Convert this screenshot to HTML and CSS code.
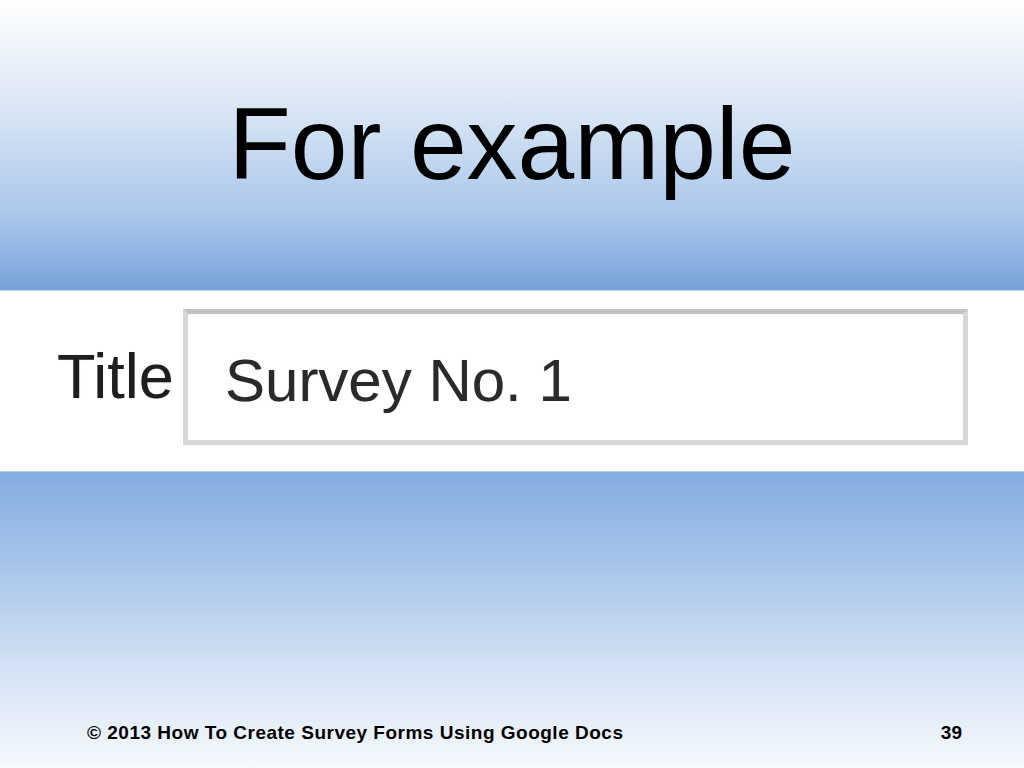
FILE: index.html
```html
<!DOCTYPE html>
<html>
<head>
<meta charset="utf-8">
<link rel="stylesheet" href="styles.css">
</head>
<body>
<div class="slide">
  <header class="top">
    <h1 class="heading">For example</h1>
  </header>
  <section class="band">
    <span class="label">Title</span>
    <div class="field"><span class="field-text">Survey No. 1</span></div>
  </section>
  <section class="bottom">
    <footer class="footer">
      <span class="footer-left">© 2013 How To Create Survey Forms Using Google Docs</span>
      <span class="footer-right">39</span>
    </footer>
  </section>
</div>
</body>
</html>
```
FILE: styles.css
```css
html, body {
  margin: 0;
  padding: 0;
  background: #ffffff;
}
.slide {
  width: 1024px;
  height: 768px;
  display: flex;
  flex-direction: column;
  font-family: "Liberation Sans", Arial, sans-serif;
  overflow: hidden;
}
.top {
  height: 290px;
  box-sizing: border-box;
  padding-top: 93px;
  background: linear-gradient(to bottom, #ffffff 0%, #dde8f6 35%, #a9c6ea 75%, #76a3da 100%);
  display: flex;
  justify-content: center;
}
.heading {
  margin: 0;
  font-weight: normal;
  font-size: 102px;
  line-height: 1;
  color: #000000;
  height: 102px;
}
.band {
  height: 182px;
  box-sizing: border-box;
  background: #ffffff;
  border-top: 1px solid #c6daf0;
  border-bottom: 1px solid #b9d1ee;
  display: flex;
  align-items: flex-start;
  padding: 18px 56px 0 57px;
}
.label {
  margin-top: 36px;
  font-size: 63px;
  line-height: 1;
  color: #1e1e1e;
  text-shadow: 0 0 1px rgba(0, 0, 0, 0.25);
}
.field {
  flex: 0 0 785px;
  height: 136px;
  box-sizing: border-box;
  margin-left: auto;
  border: 5px solid #d6d6d6;
  border-top-color: #c2c2c2;
  background: #ffffff;
  padding: 37px 0 0 37px;
}
.field-text {
  display: block;
  font-size: 60px;
  line-height: 1;
  color: #2a2a2a;
  text-shadow: 0 0 1px rgba(0, 0, 0, 0.25);
}
.bottom {
  flex: 1;
  background: linear-gradient(to bottom, #84aee0 0%, #a6c4ea 30%, #d2e1f4 65%, #f6f9fd 100%);
  display: flex;
  flex-direction: column;
  justify-content: flex-end;
  padding: 0 62px 26px 87px;
}
.footer {
  display: flex;
  justify-content: space-between;
  font-size: 19px;
  font-weight: bold;
  line-height: 18px;
  letter-spacing: 0.5px;
  color: #000000;
}
.footer-right {
  letter-spacing: 0;
}
```
